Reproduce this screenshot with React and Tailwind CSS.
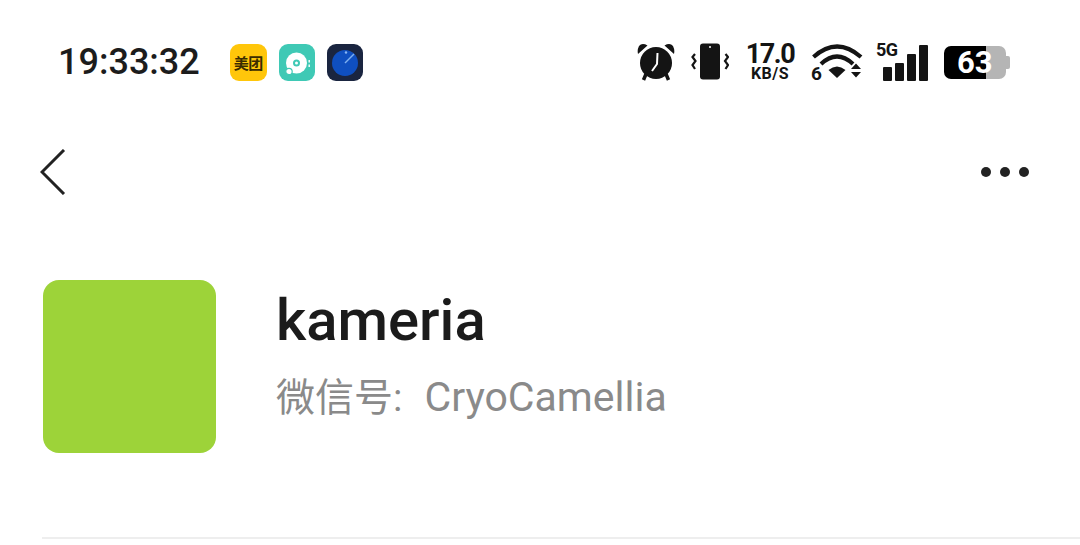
function AppIcons() {
  return (
    <div className="flex items-center gap-[12px] ml-[30px]">
      <div className="w-[37px] h-[37px] rounded-[9px] bg-[#ffc60a] flex items-center justify-center">
        <span className="text-[15px] leading-none font-bold text-[#3a2c00] tracking-[-0.5px] [font-family:'Noto_Sans_CJK_SC',sans-serif]">美团</span>
      </div>
      <div className="w-[36px] h-[37px] rounded-[9px] bg-[#3fc9b5]">
        <svg viewBox="0 0 36 37" className="w-full h-full">
          <circle cx="17.500" cy="19" r="10.500" fill="#fff" />
          <circle cx="17.500" cy="19" r="3.500" fill="#3fc9b5" />
          <circle cx="17.500" cy="19" r="1.500" fill="#fff" />
          <circle cx="10" cy="27.500" r="3.200" stroke="#3fc9b5" strokeWidth="1.200" fill="#fff" />
          <rect x="29.500" y="16" width="1.400" height="2.500" fill="#fff" />
          <rect x="29.500" y="20.500" width="1.400" height="2.500" fill="#fff" />
        </svg>
      </div>
      <div className="w-[36px] h-[37px] rounded-[9px] bg-[#1a2540]">
        <svg viewBox="0 0 36 37" className="w-full h-full">
          <circle cx="18" cy="19" r="13" fill="#0f4fc0" />
          <path d="M18 19 L27 10" stroke="#7fb0f0" strokeWidth="1.500" />
          <circle cx="19" cy="8.500" r="1.200" fill="#8ab8f5" />
        </svg>
      </div>
    </div>
  )
}

function Alarm() {
  return (
    <svg viewBox="0 0 38 38" className="w-[38px] h-[38px]">
      <path d="M1 11 L10.500 2.500 Q5 -0.500 2 3 Q0 7 1 11Z M37 11 L27.500 2.500 Q33 -0.500 36 3 Q38 7 37 11Z" fill="#141414" />
      <circle cx="19" cy="20" r="16" fill="#141414" />
      <path d="M20.500 10 L20 21 L15 28" stroke="#fff" strokeWidth="2" fill="none" />
      <path d="M9 31 L6.500 37 M29 31 L31.500 37" stroke="#141414" strokeWidth="3.500" />
    </svg>
  )
}

function Vibrate() {
  return (
    <svg viewBox="0 0 38 38" className="w-[38px] h-[38px]">
      <rect x="9" y="0.500" width="20" height="36" rx="3" fill="#141414" />
      <circle cx="19" cy="4" r="1" fill="#fff" />
      <path d="M4 11 L1.500 14 L4.500 18 L1.500 22 L4 26" stroke="#141414" strokeWidth="2.200" fill="none" />
      <path d="M34.500 11 L37 14 L34 18 L37 22 L34.500 26" stroke="#141414" strokeWidth="2.200" fill="none" />
    </svg>
  )
}

function Wifi() {
  return (
    <div className="relative w-[52px] h-[38px]">
      <svg viewBox="0 0 52 38" className="w-full h-full">
        <path d="M2.500 14 Q26 -7 50 14" stroke="#141414" strokeWidth="4.200" fill="none" />
        <path d="M10 21 Q26 6 42 21" stroke="#141414" strokeWidth="4.200" fill="none" />
        <path d="M17.500 27 L26 35 L34.500 27 Q26 20 17.500 27Z" fill="#141414" />
        <path d="M40 26 L45 20.500 L50 26Z M40 29 L45 34.500 L50 29Z" fill="#141414" />
      </svg>
      <span className="absolute left-0 bottom-[-2px] text-[19px] leading-none font-bold text-[#141414]">6</span>
    </div>
  )
}

function Signal() {
  return (
    <div className="relative w-[52px] h-[38px]">
      <span className="absolute left-0 top-[-2px] text-[18px] leading-none font-bold text-[#141414] tracking-[-0.5px]">5G</span>
      <div className="absolute right-0 bottom-0 flex items-end gap-[3px]">
        <div className="w-[9px] h-[14px] rounded-[1px] bg-[#141414]" />
        <div className="w-[9px] h-[18px] rounded-[1px] bg-[#141414]" />
        <div className="w-[9px] h-[27px] rounded-[1px] bg-[#141414]" />
        <div className="w-[9px] h-[36px] rounded-[1px] bg-[#141414]" />
      </div>
    </div>
  )
}

function Battery() {
  return (
    <div className="relative flex items-center w-[66px] h-[33px]">
      <div className="flex w-[62px] h-full rounded-[7px] overflow-hidden">
        <div className="w-[42px] bg-black" />
        <div className="flex-1 bg-[#b5b5b5]" />
      </div>
      <div className="w-[4px] h-[13px] rounded-r-[2px] bg-[#b5b5b5]" />
      <span className="absolute left-[13px] top-0 text-[31px] leading-[33px] font-bold text-white">63</span>
    </div>
  )
}

export default function App() {
  return (
    <div className="w-[1080px] h-[545px] bg-white overflow-hidden font-['Roboto',sans-serif]">
      <div className="flex items-center justify-between h-[44px] mt-[40px] pl-[58px] pr-[70px]">
        <div className="flex items-center">
          <span className="text-[36px] leading-none font-medium text-[#1c1c1c]">19:33:32</span>
          <AppIcons />
        </div>
        <div className="flex items-center">
          <Alarm />
          <div className="ml-[16px]"><Vibrate /></div>
          <div className="ml-[18px] flex flex-col items-center w-[46px] text-[#141414] font-bold">
            <span className="text-[27px] leading-[20px] tracking-[-1.500px]">17.0</span>
            <span className="text-[16px] leading-[12px] mt-[4px] tracking-[0.5px]">KB/S</span>
          </div>
          <div className="ml-[18px]"><Wifi /></div>
          <div className="ml-[13px]"><Signal /></div>
          <div className="ml-[16px]"><Battery /></div>
        </div>
      </div>

      <div className="flex items-center justify-between h-[46px] mt-[65px] pl-[40px] pr-[51px]">
        <svg viewBox="0 0 26 46" className="w-[26px] h-[46px]">
          <path d="M24 1 L2 23 L24 45" stroke="#222" strokeWidth="3" fill="none" />
        </svg>
        <div className="flex items-center gap-[9px]">
          <div className="w-[10px] h-[10px] rounded-full bg-[#222]" />
          <div className="w-[10px] h-[10px] rounded-full bg-[#222]" />
          <div className="w-[10px] h-[10px] rounded-full bg-[#222]" />
        </div>
      </div>

      <div className="flex items-start mt-[85px] ml-[43px]">
        <div className="w-[173px] h-[173px] rounded-[16px] bg-[#9dd339]" />
        <div className="ml-[60px] flex flex-col">
          <span className="text-[58px] leading-[64px] mt-[8px] font-medium text-[#1b1b1b]">kameria</span>
          <div className="mt-[21px] h-[48px] flex items-baseline text-[#8a8a8a] [font-family:'Roboto','Noto_Sans_CJK_SC',sans-serif]">
            <span className="text-[39px] leading-[48px]">微信号:</span>
            <span className="ml-[22px] text-[41px] leading-[48px]">CryoCamellia</span>
          </div>
        </div>
      </div>

      <div className="h-[2px] bg-[#eeeeee] ml-[42px] mt-[84px]" />
    </div>
  )
}
